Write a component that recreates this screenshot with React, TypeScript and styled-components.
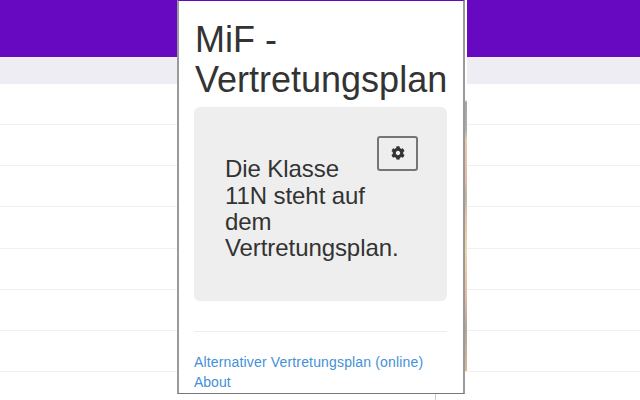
import styled, { createGlobalStyle } from "styled-components";
import { FaCog } from "react-icons/fa";

const rows = [0, 1, 2, 3, 4, 5, 6, 7];

const App = () => {
    return (
        <>
            <GlobalStyle />
            <Page>
                <TopBar />
                <SubBar />
                {rows.map((row) => (
                    <Row key={row} />
                ))}
            </Page>
            <Strip />
            <Popup>
                <Title>MiF - Vertretungsplan</Title>
                <Well>
                    <SettingsButton>
                        <FaCog />
                    </SettingsButton>
                    <Message>Die Klasse 11N steht auf dem Vertretungsplan.</Message>
                </Well>
                <Divider />
                <LinkList>
                    <PlainLink href="#" $spacing={0.16}>Alternativer Vertretungsplan (online)</PlainLink>
                    <PlainLink href="#">About</PlainLink>
                </LinkList>
            </Popup>
            <BottomTick />
        </>
    );
};

export default App;

const GlobalStyle = createGlobalStyle`
    html, body {
        margin: 0;
        width: 640px;
        height: 400px;
        overflow: hidden;
        background: #fff;
        font-family: "Liberation Sans", Arial, sans-serif;
    }
`;

const Page = styled.div`
    width: 640px;
    height: 400px;
    overflow: hidden;
`;

const TopBar = styled.div`
    height: 57px;
    background-color: #6609c0;
`;

const SubBar = styled.div`
    height: 27px;
    background-color: #eeedf3;
`;

const Row = styled.div`
    box-sizing: border-box;
    height: 41.15px;
    border-bottom: 1px solid #f0f0f3;
`;

const Popup = styled.div`
    position: absolute;
    left: 177px;
    top: 0;
    width: 253px;
    height: 392px;
    padding: 0 16px 0 15px;
    overflow: hidden;
    background: #fff;
    border-left: 2px solid #9a9a9a;
    border-right: 2px solid #9a9a9a;
    border-bottom: 1px solid #777;
    border-top: 1px solid #6609c0;
    box-sizing: content-box;
    color: #333;
`;

const Title = styled.h1`
    margin: 19px -1px 8px 0;
    padding-left: 1px;
    font-size: 36px;
    font-weight: 500;
    line-height: 39.6px;
    color: #333;
`;

const Well = styled.div`
    box-sizing: border-box;
    height: 194px;
    padding: 29px 30px 0 31px;
    background-color: #eee;
    border-radius: 6px;
`;

const SettingsButton = styled.button`
    float: right;
    width: 41px;
    height: 35px;
    margin-right: -1px;
    padding: 0 0 2px;
    display: flex;
    align-items: center;
    justify-content: center;
    background: #eee;
    border: 2px solid #757575;
    border-radius: 3px;
    color: #333;
    font-size: 14px;
`;

const Message = styled.p`
    margin: 20px 0 0;
    font-size: 24px;
    line-height: 26.4px;
    letter-spacing: -0.08px;
    font-weight: 400;
`;

const Divider = styled.hr`
    margin: 30px 0 20px;
    border: 0;
    border-top: 1px solid #eee;
`;

const LinkList = styled.div`
    display: flex;
    flex-direction: column;
    align-items: flex-start;
`;

const PlainLink = styled.a<{ $spacing?: number }>`
    font-size: 14px;
    line-height: 20px;
    letter-spacing: ${(props) => props.$spacing ?? 0}px;
    color: #4590d8;
    text-decoration: none;
`;

const Strip = styled.div`
    position: absolute;
    left: 465px;
    top: 0;
    width: 2px;
    height: 371px;
    background: linear-gradient(
        to bottom,
        #fff 0,
        #fff 100px,
        #a5a5a5 102px,
        #aab0aa 130px,
        #e8c9a8 140px,
        #e9b8a0 180px,
        #b8b8a8 197px,
        #e8c0a0 215px,
        #ecd8a8 250px,
        #e8b8a0 295px,
        #b0a898 330px,
        #d8b890 371px
    );
`;

const BottomTick = styled.div`
    position: absolute;
    left: 435px;
    top: 394px;
    width: 1px;
    height: 6px;
    background: #ccc;
`;
